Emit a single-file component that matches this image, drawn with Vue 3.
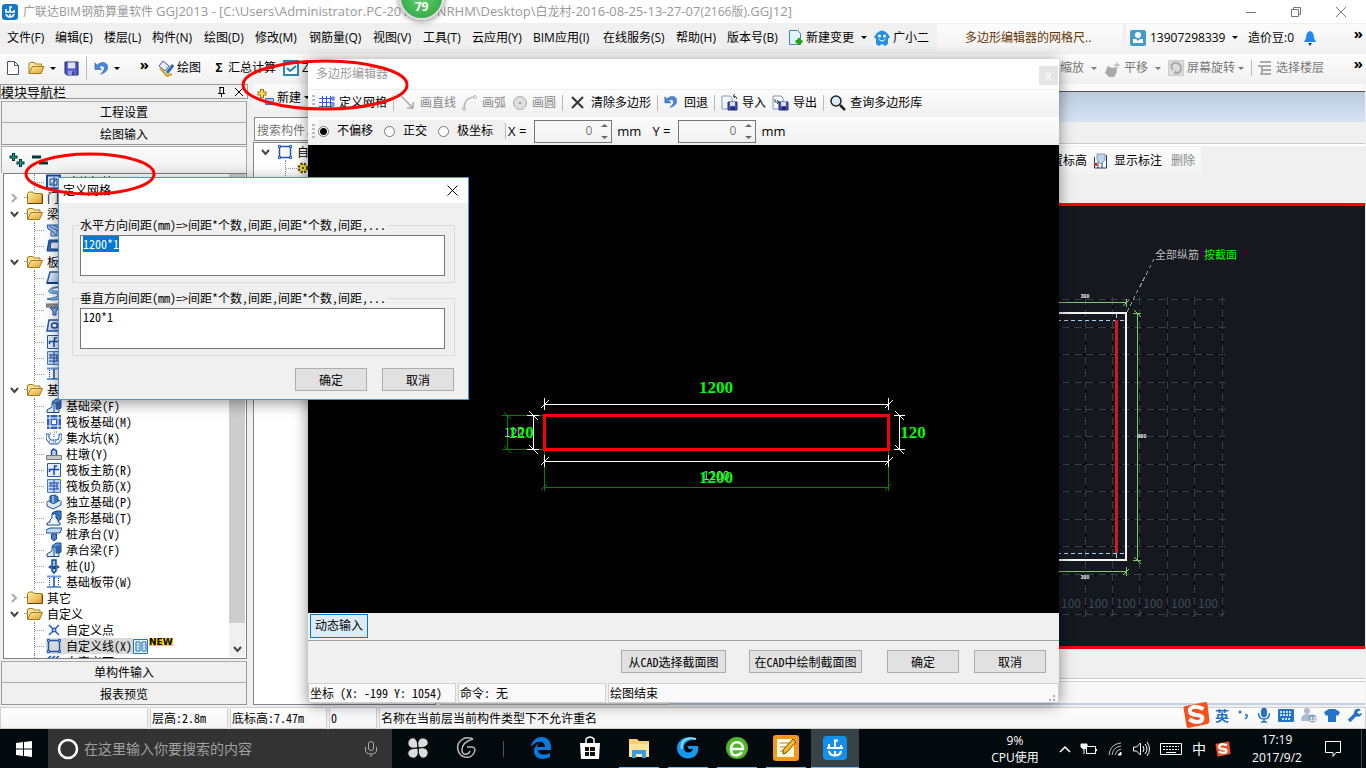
<script setup>
import { onMounted, ref } from 'vue'

const menus = ['文件(F)', '编辑(E)', '楼层(L)', '构件(N)', '绘图(D)', '修改(M)', '钢筋量(Q)', '视图(V)', '工具(T)', '云应用(Y)', 'BIM应用(I)', '在线服务(S)', '帮助(H)', '版本号(B)']

const tree = [
  { level: 2, icon: 'wall', label: '砖体加筋(Y)' },
  { level: 1, icon: 'folder', label: '门窗洞' },
  { level: 1, icon: 'open', label: '梁', expanded: true },
  { level: 2, icon: 'beam', label: '梁(L)' },
  { level: 2, icon: 'ring', label: '圈梁(E)' },
  { level: 1, icon: 'open', label: '板', expanded: true },
  { level: 2, icon: 'slab', label: '现浇板(B)' },
  { level: 2, icon: 'spiral', label: '螺旋板(B)' },
  { level: 2, icon: 'cap', label: '柱帽(V)' },
  { level: 2, icon: 'hole', label: '板洞(N)' },
  { level: 2, icon: 'raft', label: '板受力筋(S)' },
  { level: 2, icon: 'raft2', label: '板负筋(F)' },
  { level: 2, icon: 'strip', label: '楼层板带(H)' },
  { level: 1, icon: 'open', label: '基础', expanded: true },
  { level: 2, icon: 'fbeam', label: '基础梁(F)' },
  { level: 2, icon: 'mat', label: '筏板基础(M)' },
  { level: 2, icon: 'pit', label: '集水坑(K)' },
  { level: 2, icon: 'pier', label: '柱墩(Y)' },
  { level: 2, icon: 'raft', label: '筏板主筋(R)' },
  { level: 2, icon: 'raft2', label: '筏板负筋(X)' },
  { level: 2, icon: 'iso', label: '独立基础(P)' },
  { level: 2, icon: 'tfound', label: '条形基础(T)' },
  { level: 2, icon: 'cap2', label: '桩承台(V)' },
  { level: 2, icon: 'fbeam', label: '承台梁(F)' },
  { level: 2, icon: 'pile', label: '桩(U)' },
  { level: 2, icon: 'strip', label: '基础板带(W)' },
  { level: 1, icon: 'folder', label: '其它' },
  { level: 1, icon: 'open', label: '自定义', expanded: true },
  { level: 2, icon: 'point', label: '自定义点' },
  { level: 2, icon: 'poly', label: '自定义线(X)', selected: true },
  { level: 2, icon: 'area', label: '自定义面' }
]

const gridX = [1085, 1112, 1139, 1167, 1194, 1222]
const gridY = [299, 327, 354, 382, 409, 436, 464, 491, 519, 546, 574]
const dimX = [1071, 1098, 1126, 1153, 1181, 1208]

const offset = ref('none')
const x = ref('0')
const y = ref('0')
const horizontal = ref('1200*1')
const vertical = ref('120*1')
const firstField = ref(null)

onMounted(() => {
  firstField.value.focus()
  firstField.value.select()
})
</script>

<template>
  <div class="screen">
    <svg class="defs" width="0" height="0" aria-hidden="true">
      <defs>
        <linearGradient id="gold" x1="0" y1="0" x2="1" y2="1"><stop offset="0" stop-color="#fff0b0" /><stop offset="1" stop-color="#e0a020" /></linearGradient>
        <linearGradient id="pale" x1="0" y1="0" x2="1" y2="1"><stop offset="0" stop-color="#fff" /><stop offset="1" stop-color="#9cc0ee" /></linearGradient>
        <symbol id="folder" viewBox="0 0 16 16"><path d="M.5 3.5 2 2h4l1 1.500h8v10H.5z" fill="url(#gold)" stroke="#a87818" /><path d="M1 13.500h14.500v-9" fill="none" stroke="#5a4a20" /></symbol>
        <symbol id="open" viewBox="0 0 16 16"><path d="M.5 13V3.500L2 2.500h4l1 1.500h6v3" fill="#fbe6a0" stroke="#a87818" /><path d="M.5 13.500 4 6.500h11.500l-3 7z" fill="url(#gold)" stroke="#a87818" /></symbol>
        <symbol id="wall" viewBox="0 0 16 16"><path d="M1 1.500h13v13H1z" fill="#d8e6fa" stroke="#1548a8" stroke-width="2" /><path d="M4 5h7v6H4zM4 11l7-6M8 3v10" stroke="#1548a8" fill="none" /></symbol>
        <symbol id="beam" viewBox="0 0 16 16"><path d="M1 3h13l1 3-4 2v6H5V8L2 7z" fill="#a8c8f0" stroke="#2860b0" /><path d="m3 4 9 5M7 3l6 3M6 9l4 4" stroke="#2860b0" /></symbol>
        <symbol id="ring" viewBox="0 0 16 16"><path d="M3 2h12v11H1z" fill="#3a70c0" stroke="#123f88" /><path d="M5 4h8v7H4z" fill="#e8f0fc" stroke="#123f88" /></symbol>
        <symbol id="slab" viewBox="0 0 16 16"><path d="M4 2h11v11H1z" fill="url(#pale)" stroke="#2458b0" stroke-width="1.500" /><path d="M1 13h14" stroke="#123f88" stroke-width="2" /></symbol>
        <symbol id="spiral" viewBox="0 0 16 16"><path d="M14 1C4 0 0 6 5 7s7 0 7 2-5 3-11 4c5 2 14 1 14-4s-9-3-9-5 4-2 8-3" fill="#8cc4f0" stroke="#2472b8" /></symbol>
        <symbol id="cap" viewBox="0 0 16 16"><path d="M0 2h16v3H0z" fill="#999" stroke="#666" /><path d="M4 6h9l-3 3v4H7V9z" fill="#8cb4e8" stroke="#1548a8" /></symbol>
        <symbol id="hole" viewBox="0 0 16 16"><path d="M3 2h12v11H1z" fill="url(#pale)" stroke="#2458b0" stroke-width="1.500" /><ellipse cx="8.500" cy="7.500" rx="3" ry="2.500" fill="#fff" stroke="#1548a8" stroke-width="1.500" /></symbol>
        <symbol id="raft" viewBox="0 0 16 16"><path d="M1.500 1.500h13v13h-13z" fill="#e4eefc" stroke="#2458b0" /><path d="M3.500 10V7.500h5V4H11M8 7.500h5M8 7v6" fill="none" stroke="#1548a8" stroke-width="1.500" /></symbol>
        <symbol id="raft2" viewBox="0 0 16 16"><path d="M1.500 1.500h13v13h-13z" fill="#c4d8f6" stroke="#4878c8" /><path d="M3 5h10M3 11h10M8 2v12M5 5v3M11 5v6M3 8h9" fill="none" stroke="#1548a8" /></symbol>
        <symbol id="strip" viewBox="0 0 16 16"><path d="M1 2.500h14M1 13h14" stroke="#6a9ae0" stroke-width="2" /><path d="M3.500 4v8M12.500 4v8" stroke="#1548a8" stroke-dasharray="1 1" /><path d="M8 3v10" stroke="#1548a8" stroke-width="1.500" /></symbol>
        <symbol id="fbeam" viewBox="0 0 16 16"><path d="m6 4 4-3h5v9l-4 1z" fill="#5c96d8" stroke="#174a90" /><path d="M6 5h4v6h3v3.500H1V12l5-3z" fill="#dceafa" stroke="#174a90" /><path d="M10 4v6l5 1V3z" fill="#2c62ac" /><path d="M8 5v9" stroke="#174a90" /></symbol>
        <symbol id="mat" viewBox="0 0 16 16"><path d="M1 1h14v14H1z" fill="#2c60b8" /><path d="M1 4h14M1 12h14M4 1v14M12 1v14" stroke="#fff" /><path d="M6 6h4v4H6z" fill="#fff" /></symbol>
        <symbol id="pit" viewBox="0 0 16 16"><path d="M0 4h3v4l2 2h6l2-2V4h3v5l-4 5H4L0 9z" fill="#e4effc" stroke="#1c54ae" /><path d="M4 3h2M8 2h3M8 4v3M3 11h2m2 1h3m2-3h2" stroke="#1c54ae" stroke-dasharray="1 1" /></symbol>
        <symbol id="pier" viewBox="0 0 16 16"><path d="M5.500 10V5l2-2 3 2v5" fill="#bcd4f4" stroke="#1548a8" stroke-width="1.500" /><path d="M.5 9.500h15v4H.5z" fill="#c8c8c8" stroke="#777" /></symbol>
        <symbol id="iso" viewBox="0 0 16 16"><path d="m1 8 6-3 8 2v4l-8 4-6-3z" fill="#dceafa" stroke="#174a90" /><path d="m4 2 5-1 3 2v5L8 10 4 8z" fill="#3c74bc" stroke="#174a90" /><path d="M7 2v7M1 9l6 2 8-4" stroke="#dceafa" fill="none" /></symbol>
        <symbol id="tfound" viewBox="0 0 16 16"><path d="m6 3 4-2h5v8l-4 3z" fill="#3c74bc" stroke="#174a90" /><path d="M6 4h4v4l2 2v2l2 1v2H1v-2l3-1v-2l2-2z" fill="#f0f6ff" stroke="#174a90" /></symbol>
        <symbol id="cap2" viewBox="0 0 16 16"><path d="m0 4 4-2h12l-2 5H0z" fill="#c4daf4" stroke="#174a90" /><path d="M5.500 8h5v5L8 15l-2.500-2z" fill="#4a80c4" stroke="#174a90" /></symbol>
        <symbol id="pile" viewBox="0 0 16 16"><path d="M6 2h4v11l-2 2-2-2z" fill="#9cc0ee" stroke="#174a90" stroke-width="1.500" /><path d="m2 9 3-2v4zM14 9l-3-2v4zM6 8h4v3H6z" fill="#174a90" /></symbol>
        <symbol id="point" viewBox="0 0 16 16"><path d="m3 3 10 10M13 3 3 13" stroke="#2c60b8" stroke-width="1.500" /><circle cx="8" cy="8" r="2" fill="#8cb4e8" stroke="#1548a8" /></symbol>
        <symbol id="poly" viewBox="0 0 16 16"><path d="M2.500 2.500h11v11h-11z" fill="none" stroke="#1c54b8" stroke-width="1.500" /><path d="M1.500 1.500h2v2h-2zM12.500 1.500h2v2h-2zM1.500 12.500h2v2h-2zM12.500 12.500h2v2h-2z" fill="#cfe2ff" stroke="#1c54b8" /></symbol>
        <symbol id="area" viewBox="0 0 16 16"><path d="m1 5 4-3M5 5l4-3M9 5l4-3" stroke="#1c54b8" stroke-width="1.500" /></symbol>
        <symbol id="undo" viewBox="0 0 16 16"><path d="M1 2v7h7L5.500 6.500C8 4 11 5 11 8c0 2-2 4-4 6 5-1 7.500-4 7.500-7.500C14.500 1 7 0 3.500 4.500z" fill="#4a86dc" stroke="#2456a8" stroke-width=".6" /></symbol>
        <symbol id="save" viewBox="0 0 16 16"><path d="M1 1h14v14H3l-2-2z" fill="#4450c0" stroke="#283080" /><path d="M4 1.500h8V8H4z" fill="#dce4fa" /><path d="M4 10h8v5H4z" fill="#9098e0" /><path d="M9 11h2v4H9z" fill="#20286c" /></symbol>
        <symbol id="transfer" viewBox="0 0 17 17"><path d="M1 2h8l2 2v11H1z" fill="#f4f8ff" stroke="#8898b8" /><path d="M7 8h9v8H7z" fill="#4450b8" stroke="#283080" /><path d="M9 8h5v4H9z" fill="#d8dff8" /><path d="M10 13h4v3h-4z" fill="#222c70" /></symbol>
        <symbol id="sogou" viewBox="0 0 28 28"><path d="M3 5 23 1q2 0 2 2l2 17q0 2-2 3L6 27q-2 0-2-2L1 7q0-2 2-2z" fill="#f4511e" /><path d="M21 8C12 3 5 7 8 12c3 3 12 1 12 5 0 5-9 5-13 1" fill="none" stroke="#fff" stroke-width="4" /></symbol>
      </defs>
    </svg>

    <header class="titlebar">
      <svg class="app-mark" viewBox="0 0 16 16"><rect width="16" height="16" rx="3" fill="#1478c8" /><path d="M10 3H8v5H3M8 8h5M8 10v3M4 10c1 4 7 4 8 0M4 5v3M12 6v2" fill="none" stroke="#fff" stroke-width="1.500" /></svg>
      <h1>广联达BIM钢筋算量软件 <span>GGJ2013 - [C:\Users\Administrator.PC-2014</span>007<span>NRHM\Desktop\</span>白龙村-<span>2016-08-25-13-27-07</span>(2166版)<span>.GGJ12]</span></h1>
      <div class="window-tools">
        <button aria-label="最小化"><svg width="12" height="12"><path d="M1 6.500h10" stroke="#777" /></svg></button>
        <button aria-label="还原"><svg width="12" height="12" fill="none" stroke="#777"><path d="M1.500 3.500h7v7h-7zM3.500 3V1.500h7v7H9" /></svg></button>
        <button aria-label="关闭"><svg width="12" height="12"><path d="m1 1 10 10M11 1 1 11" stroke="#777" /></svg></button>
      </div>
    </header>

    <nav class="menubar">
      <div class="menus">
        <button v-for="m in menus" :key="m">{{ m }}</button>
        <button class="iconed"><svg width="15" height="16"><path d="M1.500.5h8l3 3v11h-11z" fill="#e4f4ff" stroke="#3a86b8" /><path d="M11 8v7M7.500 11.500h7" stroke="#28a018" stroke-width="3" /></svg>新建变更<i class="drop"></i></button>
        <button class="iconed"><svg width="16" height="16"><path d="M3 3q5-5 10 0l3 4-2 2v5l-3 2-3-2-3 2-3-2V9L0 7z" fill="#2490e0" /><circle cx="5.500" cy="6" r="1.500" fill="#fff" /><circle cx="10.500" cy="6" r="1.500" fill="#fff" /><path d="M4.500 9q3.500 4 7 0" stroke="#fff" fill="none" /></svg>广小二</button>
      </div>
      <div class="promo"><a href="#">多边形编辑器的网格尺..</a></div>
      <div class="account">
        <button class="iconed phone"><svg width="16" height="16"><rect width="16" height="16" rx="2" fill="#429ccc" /><circle cx="8" cy="5" r="3" fill="#fff" /><path d="M3 13V9h3l2 2 2-2h3v4z" fill="#fff" /></svg>13907298339<i class="drop"></i></button>
        <span>造价豆:0</span>
        <button aria-label="通知"><svg width="14" height="16"><path d="M7 1q4 1 4 7l2 4H1l2-4q0-6 4-7" fill="#2088f0" /><path d="M5 13h4L7 16z" fill="#124880" /></svg></button>
        <b class="more">»</b>
      </div>
    </nav>

    <div class="toolbar">
      <div class="file-tools">
        <button aria-label="新建"><svg width="14" height="16"><path d="M1.500 1.500h7l4 4v9h-11z" fill="#fff" stroke="#46586e" /><path d="M8.500 1.500v4h4" fill="none" stroke="#46586e" /></svg></button>
        <button aria-label="打开"><svg width="17" height="16"><use href="#open" /></svg></button><i class="drop"></i>
        <button aria-label="保存"><svg width="15" height="15"><use href="#save" /></svg></button>
        <i class="rule"></i>
        <button aria-label="撤销"><svg width="15" height="15"><use href="#undo" /></svg></button><i class="drop"></i>
        <b class="more">»</b>
      </div>
      <div class="draw-tools">
        <button class="iconed"><svg width="17" height="17"><path d="m2 6 4-5 6 5-4 5z" fill="#e0eaf8" stroke="#445c90" /><path d="m3 8 7 8 5-2" fill="none" stroke="#d8a020" stroke-width="2" /><path d="m10 13 6-8" stroke="#3868b0" stroke-width="3" /></svg>绘图</button>
        <button class="sum"><b>Σ</b>汇总计算</button>
        <button class="iconed"><svg width="16" height="16"><rect width="16" height="16" fill="#2c88b8" /><path d="M2 3h12v11H2z" fill="#fff" /><path d="m4 8 3 3 6-5" fill="none" stroke="#2080c0" stroke-width="2" /></svg>Z</button>
      </div>
      <div class="view-tools">
        <span>缩放</span><i class="drop"></i>
        <svg width="17" height="17"><path d="M3 8q0-3 3-1l2 1 4-1 1 5-3 5H5l-4-4z" fill="#aaa" /><path d="M10 5h6M13 2v7" stroke="#aaa" /></svg><span>平移</span><i class="drop"></i>
        <svg width="16" height="16"><path d="M.5.5h15v15H.5z" fill="#ddd" stroke="#ccc" /><path d="M3 6q2-4 6-3 5 2 4 7M13 10q-2 4-6 3l1-2M3 6l2 4" fill="none" stroke="#aaa" stroke-width="2" /></svg><span>屏幕旋转</span><i class="drop tight"></i>
        <i class="rule"></i>
        <svg width="16" height="16"><path d="M3 2h11M1 6h13M5 10h9M3 14h11M5 6v8" stroke="#aaa" stroke-width="2" /></svg><span>选择楼层</span>
        <b class="more">»</b>
      </div>
    </div>

    <main class="work">
      <aside class="nav">
        <div class="nav-title"><span>模块导航栏</span><svg width="28" height="12" fill="none" stroke="#000"><path d="M3 1.500h5M4 1v6M7.500 1v6M2 7.500h7M5.500 8v3" /><path d="m19 2 8 8M27 2l-8 8" /></svg></div>
        <button class="section">工程设置</button>
        <button class="section">绘图输入</button>
        <div class="nav-tools"><svg width="40" height="20"><path d="M5.500 1v8M1.500 5h8M12.500 7v8M8.500 11h8" stroke="#003838" stroke-width="3" /><path d="M5.500 2v6M2.500 5h6M12.500 8v6M9.500 11h6" stroke="#20a090" stroke-width="1" /><path d="M24 5h9M31 11h9" stroke="#003838" stroke-width="3" /></svg></div>
        <div class="tree">
          <ul>
            <li v-for="(n, i) in tree" :key="i" :class="['l' + n.level, { selected: n.selected }]">
              <svg v-if="n.level === 1" class="chev" width="9" height="9" fill="none" stroke-width="2"><path :d="n.expanded ? 'M1 2l3.500 4L8 2' : 'M2 0l4 4-4 4'" :stroke="n.expanded ? '#444' : '#aaa'" /></svg>
              <i class="twig"></i>
              <span class="node"><svg width="16" height="16"><use :href="'#' + n.icon" /></svg><span class="name">{{ n.label }}</span></span>
              <template v-if="n.selected"><svg width="15" height="15"><path d="M.5.500h14v14H.5z" fill="#dff2ff" stroke="#2878a8" /><path d="M3 3h4v9H3zM9 3h4v9H9z" fill="none" stroke="#2468a0" /><path d="M3 6h4M9 6h4M3 9h4M9 9h4" stroke="#68a0d0" /></svg><em class="new">NEW</em></template>
            </li>
          </ul>
          <div class="scroll"><svg width="9" height="7" fill="none" stroke="#444" stroke-width="2"><path d="m1 1 3.500 4L8 1" /></svg></div>
        </div>
        <button class="section">单构件输入</button>
        <button class="section">报表预览</button>
      </aside>

      <section class="members">
        <div class="member-tools"><button class="iconed"><svg width="17" height="17"><path d="M5 0v9M.5 4.500h9" stroke="#9a7a10" stroke-width="4" /><path d="M5 1v7M1.500 4.500h7" stroke="#ffe060" stroke-width="2" /><path d="M8.500 9.500h8v6h-8z" fill="#a8ccf8" stroke="#3868c0" /></svg>新建<i class="drop"></i></button></div>
        <input class="search" aria-label="搜索构件" placeholder="搜索构件..." />
        <div class="member-tree">
          <div class="member root"><svg width="9" height="9" fill="none" stroke="#444" stroke-width="2"><path d="M1 2l3.500 4L8 2" /></svg><svg width="16" height="16"><use href="#poly" /></svg>自定义线</div>
          <div class="member leaf"><i></i><svg width="12" height="12"><circle cx="6" cy="6" r="4" fill="#ffe820" stroke="#554800" stroke-width="3" stroke-dasharray="2 1.200" /><circle cx="6" cy="6" r="3" fill="#ffe820" /><circle cx="6" cy="6" r="1" /></svg></div>
        </div>
      </section>

      <section class="spare"></section>

      <section class="view">
        <div class="view-strip"></div>
        <div class="view-head"></div>
        <div class="view-gap"></div>
        <div class="view-bar">
          <div><span>设置标高</span><svg width="15" height="16"><path d="M1.500 4v11h12V2" fill="#fff" stroke="#124070" /><path d="M5 15V9M9 15V8" stroke="#124070" /><path d="M4 1h8v6l-4 4-4-4z" fill="#b8d4f0" stroke="#9098a8" /><path d="M1 10h3v3H1z" fill="#e02818" /></svg><span>显示标注</span><span class="off">删除</span></div>
        </div>
        <div class="drawing">
          <svg width="696" height="440" viewBox="669 206 696 440" fill="none" shape-rendering="crispEdges">
            <g stroke="#000"><path v-for="g in gridX" :key="g" :d="`M${g}.5 297V618`" /><path v-for="g in gridY" :key="g" :d="`M1050 ${g}.5H1226`" /><path d="M1050 614.500H1224" /></g>
            <g stroke="#363d49" stroke-dasharray="8 4"><path v-for="g in gridX" :key="g" :d="`M${g}.5 297V618`" /><path v-for="g in gridY" :key="g" :d="`M1050 ${g}.5H1226`" /><path d="M1050 614.500H1224" /></g>
            <g stroke="#3a4250"><path v-for="g in gridX" :key="g" :d="`M${g - 2} 617l5-5`" /></g>
            <g class="dims"><text v-for="d in dimX" :key="d" :x="d" y="608">100</text></g>
            <path d="M1000 313H1126V560H1000" stroke="#f4f4f4" stroke-width="2" />
            <path d="M1050 320.500H1126M1050 553.500H1126M1116.500 314v6M1116.500 554v6" stroke="#a8d0f4" stroke-dasharray="4 3" />
            <path d="M1116.500 320V553" stroke="#d01820" stroke-width="3" />
            <path d="M1050 302.500H1126M1126.500 299v8M1123 306l6-6M1137.500 313V560M1133 313.500h8M1134 310l7 7M1133 560.500h8M1134 557l7 7M1050 571.500H1126M1126.500 567v9M1123 575l6-6" stroke="#80c868" />
            <path d="M1127 312 1155 257" stroke="#999" stroke-dasharray="4 3" />
            <g class="tiny"><text x="1085" y="298">300</text><text x="1142" y="438">900</text><text x="1085" y="579">300</text></g>
            <text class="note" x="1155" y="259" fill="#bbb">全部纵筋</text><text class="note" x="1204" y="259" fill="#0f0">按截面</text>
          </svg>
        </div>
        <div class="view-foot"></div>
      </section>
    </main>

    <footer class="status">
      <span></span><span>层高:2.8m</span><span>底标高:7.47m</span><span>0</span><span>名称在当前层当前构件类型下不允许重名</span>
      <div class="ime">
        <svg width="29" height="28"><use href="#sogou" /></svg><b>英</b>
        <svg width="14" height="16"><circle cx="4" cy="5" r="1.500" fill="#2474c8" /><path d="M9 8h2v2l-2 2" stroke="#2474c8" fill="none" stroke-width="1.500" /></svg>
        <svg width="14" height="16" fill="none" stroke="#2474c8"><rect x="4.500" y="1" width="5" height="9" rx="2.500" fill="#2474c8" /><path d="M1.500 6q0 6 5.500 6t5.500-6M7 12v3M4 15h6" stroke-width="1.500" /></svg>
        <svg width="16" height="14"><rect width="16" height="13" y="1" rx="1" fill="#2474c8" /><path d="M2 4h12M2 7h12M4 11h8" stroke="#fff" stroke-dasharray="2 1" stroke-width="1.500" /></svg>
        <svg width="16" height="16"><circle cx="6" cy="4" r="3" fill="#aabbd4" /><path d="M0 14q0-7 6-7t6 7z" fill="#aabbd4" /><circle cx="11.500" cy="11.500" r="4" fill="#8ca0be" /><text class="badge" x="8.500" y="14">12</text></svg>
        <svg width="16" height="14"><path d="M5 1h6l5 3-2 4-2-1v7H4V7L2 8 0 4z" fill="#2474c8" /></svg>
        <svg width="16" height="16"><path d="m2 14 7-7" stroke="#2474c8" stroke-width="3.500" /><path d="M14 3a4 4 0 1 0 1 3l-3 1-2-2z" fill="#2474c8" /></svg>
      </div>
    </footer>

    <footer class="taskbar">
      <button class="start" aria-label="开始"><svg width="16" height="16"><path d="m0 2 7-1v6.500H0zM8 1l8-1v7.500H8zM0 8.500h7V15l-7-1zM8 8.500h8V16l-8-1z" fill="#fff" /></svg></button>
      <label class="cortana"><svg width="22" height="22"><circle cx="11" cy="11" r="9" fill="none" stroke="#fff" stroke-width="2.500" /></svg><input aria-label="搜索" placeholder="在这里输入你要搜索的内容" /><svg width="14" height="18" fill="none" stroke="#aaa"><rect x="4.500" y="1.500" width="5" height="9" rx="2.500" /><path d="M1.500 7v3q0 4 5.500 4t5.500-4V7M7 14v3" /></svg></label>
      <div class="apps">
        <button aria-label="风车"><svg width="24" height="24" fill="#ddd" stroke="#111"><path d="M12 12C3 14 0 8 3 4s9-3 9 8zM12 12C10 3 16 0 20 3s3 9-8 9zM12 12c9-2 12 4 9 8s-9 3-9-8zM12 12c2 9-4 12-8 9s-3-9 8-9z" /></svg></button>
        <button aria-label="旋涡"><svg width="24" height="24" fill="none" stroke="#bbb" stroke-width="1.500"><path d="M18 3C9-1 1 6 3 14s12 10 16 3c2-4 0-6-2-6h-5M18 3C11 5 7 9 7 14s6 6 8 1" /></svg></button>
        <i class="bar"></i>
        <button aria-label="Edge"><svg width="24" height="24"><path d="M2 11C3 4 8 1 13 1c6 0 9 5 9 11v2H9c0 5 7 6 12 3v4C14 25 5 23 5 15c0-4 3-7 6-8-2 1-3 3-3 4h8c0-7-9-7-14 0z" fill="#0a7ae0" /></svg></button>
        <button aria-label="应用商店"><svg width="24" height="24"><path d="M2 7h20l-1 16H3z" fill="#fff" /><path d="M8 7V3q4-4 8 0v4" fill="none" stroke="#fff" stroke-width="1.500" /><path d="M7 11h4v4H7zM12 11h5v4h-5zM7 16h4v4H7zM12 16h5v4h-5z" fill="#111" /></svg></button>
        <button class="run" aria-label="文件资源管理器"><svg width="24" height="24"><path d="M2 3h8l2 2h10v16H2z" fill="#f7d070" /><path d="M2 8h20v13H2z" fill="#fde49a" /><path d="M5 22v-8h14v8h-4v-4H9v4z" fill="#3a9ce0" /></svg></button>
        <button class="run" aria-label="浏览器"><svg width="24" height="24"><path d="M20 3C10-2 1 4 1 12s9 13 17 9c4-3 5-8 4-11H11l2 3h4c-1 4-8 5-9 0-1-5 3-9 12-10z" fill="#1898ec" /><path d="M20 3C10 0 4 6 6 13" fill="none" stroke="#8cdcff" stroke-width="2" /></svg></button>
        <button class="run" aria-label="安全浏览器"><svg width="24" height="24"><circle cx="12" cy="12" r="11" fill="#4cb828" /><path d="M6 13h12c0-9-12-9-12 0s8 7 11 3" fill="none" stroke="#fff" stroke-width="2.500" /></svg></button>
        <button class="run" aria-label="笔记"><svg width="26" height="26"><rect width="26" height="26" rx="3" fill="#f49818" /><path d="M4 4h17v18H4z" fill="#fff8e0" /><path d="M7 8h10M7 12h7M7 16h5" stroke="#b88030" /><path d="m10 19 3-1L23 7l-3-3L10 15z" fill="#f8b820" stroke="#704810" /></svg></button>
        <button class="run current" aria-label="广联达"><svg width="24" height="24"><rect width="24" height="24" rx="4" fill="#1490ea" /><path d="M15 4.500h-3V12H4M12 12h8M12 15v5M6 15c1 6 11 6 12 0M6 8v4M18 9v3" fill="none" stroke="#fff" stroke-width="2" /></svg></button>
      </div>
      <div class="tray">
        <div class="cpu">9%<br />CPU使用</div>
        <div class="tray-icons">
          <svg width="12" height="12" fill="none" stroke="#fff"><path d="m1 9 5-5 5 5" stroke-width="1.500" /></svg>
          <svg width="18" height="16" fill="none" stroke="#fff"><path d="M6.500 5.500h9v7h-9zM16.500 8v2" /><path d="M1 3h6v3q-3 4-6 0zM4 8v5" fill="#fff" /></svg>
          <svg width="16" height="16" fill="none" stroke="#bbb"><path d="M2 14Q3 3 14 2M5 14q1-8 9-9M8 14q1-5 6-6" /><path d="m11 14 3-3v3z" fill="#fff" stroke="#fff" /></svg>
          <svg width="18" height="16" fill="none" stroke="#fff"><path d="M1.500 6h3l4-4v12l-4-4h-3zM11 5q2 3 0 6M13 3q4 5 0 10M15 1q5 7 0 14" /></svg>
          <svg width="24" height="14" fill="none" stroke="#fff"><path d="M1.500 1.500h21v11h-21z" /><path d="M4 4.500h16M4 7.500h16" stroke-dasharray="2 1" /><path d="M7 10.500h10" /></svg>
          <span class="zh">中</span>
          <svg width="16" height="16" viewBox="0 0 28 28"><use href="#sogou" width="28" height="28" /></svg>
        </div>
        <div class="clock">17:19<br />2017/9/2</div>
        <svg class="inbox" width="18" height="18" fill="none" stroke="#fff"><path d="M1.500 1.500h15v11H12l-3 4v-4H1.500z" /></svg>
        <i class="peek"></i>
      </div>
    </footer>

    <section class="editor">
      <div class="editor-title"><h2>多边形编辑器</h2><button aria-label="关闭">x</button></div>
      <div class="editor-tools">
        <i class="grip"></i>
        <button><svg width="16" height="16" stroke="#2c5cc0"><path d="M0 3.500h13M0 7.500h13M0 11.500h13M3.500 1v14M7.500 1v14M11.500 1v14M13 2h2v3h-2zM13 8h2v3h-2z" fill="none" /></svg>定义网格</button>
        <i class="rule"></i>
        <button disabled><svg width="16" height="16"><path d="m1 1 12 12M13 7v6H7" fill="none" stroke="#aaa" stroke-width="1.500" /></svg>画直线</button>
        <button disabled><svg width="16" height="16" fill="none" stroke="#bbb"><path d="M2 14Q2 3 12 2" stroke-width="1.500" /><circle cx="13" cy="2" r="1.500" /><circle cx="2" cy="14" r="1.500" /></svg>画弧</button>
        <button disabled><svg width="16" height="16"><circle cx="8" cy="8" r="6.500" fill="#ddd" stroke="#aaa" /><circle cx="8" cy="8" r="1" fill="#888" /></svg>画圆</button>
        <i class="rule"></i>
        <button><svg width="18" height="16"><path d="m3 2 11 11M14 2 3 13" stroke="#333" stroke-width="2" /></svg>清除多边形</button>
        <i class="rule"></i>
        <button><svg width="16" height="16"><use href="#undo" width="14" height="14" /></svg>回退</button>
        <i class="rule"></i>
        <button><svg width="17" height="17"><use href="#transfer" /><path d="M16 5q0-3-4-3l2-2m-2 2 2 2" fill="none" stroke="#345" /></svg>导入</button>
        <button><svg width="17" height="17"><use href="#transfer" /><path d="M3 5v3h4L5 6m2 2-2 2" fill="none" stroke="#345" /></svg>导出</button>
        <i class="rule"></i>
        <button><svg width="16" height="16"><circle cx="6" cy="6" r="5" fill="#d8ecfa" stroke="#222" stroke-width="1.500" /><path d="m10 10 5 5" stroke="#222" stroke-width="2.500" /></svg>查询多边形库</button>
      </div>
      <div class="editor-coords">
        <i class="grip"></i>
        <div class="radios">
          <label><input v-model="offset" type="radio" value="none" />不偏移</label>
          <label><input v-model="offset" type="radio" value="ortho" />正交</label>
          <label><input v-model="offset" type="radio" value="polar" />极坐标</label>
        </div>
        <i class="rule"></i>
        <label class="coord">X =<span class="spin"><input v-model="x" /><svg width="9" height="19"><path d="m1 5 3.500-3L8 5zM1 14l3.500 3L8 14z" fill="#666" /></svg></span>mm</label>
        <label class="coord">Y =<span class="spin"><input v-model="y" /><svg width="9" height="19"><path d="m1 5 3.500-3L8 5zM1 14l3.500 3L8 14z" fill="#666" /></svg></span>mm</label>
      </div>
      <div class="canvas">
        <svg width="751" height="468" viewBox="308 145 751 468" fill="none" shape-rendering="crispEdges">
          <path d="M507.500 415V449M502 415.500H543M502 449.500H543M504 412l7 7M504 446l7 7M544.500 451V491M888.500 451V491M544 487.500H888M541 490l6-6M885 490l6-6" stroke="#008000" />
          <g class="ghost"><text x="514" y="437">120</text><text x="716" y="480">1200</text></g>
          <g stroke="#fff"><path d="M544 404.500H888M544.500 398v12M888.500 398v12M541 408l8-8M885 408l8-8M544 461.500H888M544.500 455v12M888.500 455v12M541 465l8-8M885 465l8-8M533.500 415V449M527 415.500h12M527 449.500h12M529 411l9 9M529 445l9 9M899.500 415V449M894 415.500h11M894 449.500h11M895 411l9 9M895 445l9 9" /></g>
          <rect x="544.500" y="415.500" width="344" height="34" stroke="#f00" stroke-width="3" />
          <g class="dimension"><text x="716" y="393">1200</text><text x="716" y="483">1200</text><text x="521" y="438">120</text><text x="913" y="438">120</text></g>
        </svg>
      </div>
      <div class="dyn"><button>动态输入</button></div>
      <div class="editor-actions"><button>从CAD选择截面图</button><button>在CAD中绘制截面图</button><button>确定</button><button>取消</button></div>
      <div class="editor-status"><span>坐标 (X: -199 Y: 1054)</span><span>命令: 无</span><span>绘图结束</span><i></i></div>
    </section>

    <form class="dialog" @submit.prevent>
      <div class="dialog-title"><h2>定义网格</h2><button type="button" aria-label="关闭"><svg width="11" height="11"><path d="m.5.5 10 10m0-10-10 10" stroke="#000" /></svg></button></div>
      <div class="dialog-body">
        <fieldset><legend><label for="hor">水平方向间距(mm)=&gt;间距*个数,间距,间距*个数,间距,...</label></legend><textarea id="hor" ref="firstField" v-model="horizontal"></textarea></fieldset>
        <fieldset><legend><label for="ver">垂直方向间距(mm)=&gt;间距*个数,间距,间距*个数,间距,...</label></legend><textarea id="ver" v-model="vertical"></textarea></fieldset>
        <div class="dialog-actions"><button type="button">确定</button><button type="button">取消</button></div>
      </div>
    </form>

    <div class="meter">79</div>
    <svg class="marks" width="420" height="200" fill="none" stroke="#f00" stroke-width="3"><ellipse cx="325" cy="85" rx="82" ry="24" /><ellipse cx="90" cy="174" rx="64" ry="20" /></svg>
  </div>
</template>

<style>
body { background: #f0f0f0; }
</style>

<style scoped>
* { box-sizing: border-box; }
.screen { position: relative; display: flex; flex-direction: column; min-height: 100vh; overflow: hidden; background: #f0f0f0; color: #000; font: 12px/16px "Open Sans", "Noto Sans CJK SC", sans-serif; }
.defs { position: absolute; }
button { font: inherit; color: inherit; border: 0; padding: 0; margin: 0; background: none; white-space: nowrap; }
svg { flex: none; display: block; }
h1, h2, ul { margin: 0; padding: 0; font: inherit; list-style: none; }
a { color: inherit; text-decoration: none; }
input, textarea { font: inherit; }
.iconed { display: flex; align-items: center; gap: 3px; }
.drop { flex: none; border: 3px solid transparent; border-top-color: currentColor; border-bottom: 0; }
.rule { flex: none; width: 1px; height: 16px; background: #bbb; }
.more { font-size: 15px; line-height: 16px; }
.tree, .member-tree, .nav, .status, .dialog-body, .editor-actions, .editor-status, .search { font-family: "Noto Sans CJK SC", sans-serif; font-feature-settings: "hwid" 1; }

.titlebar { display: flex; align-items: center; height: 23px; padding-left: 2px; background: #fff; color: #999; }
.app-mark { width: 16px; height: 16px; margin-right: 5px; }
.titlebar h1 { flex: 1; white-space: nowrap; }
.titlebar span { font-size: 13px; }
.window-tools { display: flex; gap: 33px; padding-right: 19px; }

.menubar { display: flex; align-items: center; height: 31px; padding-bottom: 2px; }
.menus { flex: 1; display: grid; grid-template-columns: 48px 49px 48px 52px 51px 54px 64px 50px 49px 61px 70px 73px 51px 61px 86px 1fr; padding-left: 7px; }
.menus button { text-align: left; }
.menus .drop { margin-left: 4px; }
.promo { width: 186px; height: 28px; padding: 6px 0 0 28px; margin-right: 3px; background: linear-gradient(#fcfcfc, #f2f2f2); color: #663300; white-space: nowrap; }
.account { display: flex; align-items: center; width: 240px; height: 28px; padding-left: 4px; background: linear-gradient(#fcfcfc, #f0f0f0); }
.phone { width: 118px; gap: 4px; }
.account > span { width: 55px; }
.account .more, .view-tools .more { margin-left: auto; padding: 0 3px 10px 0; }
.phone .drop { margin-left: 3px; }

.toolbar { display: flex; align-items: center; height: 30px; padding-bottom: 2px; background: linear-gradient(#fdfdfd, #f0f0f0); }
.file-tools { display: flex; align-items: center; width: 153px; padding-left: 6px; }
.file-tools button + button { margin-left: 8px; }
.file-tools .drop { margin: 0 8px 0 5px; }
.file-tools .rule { height: 24px; margin: 0 7px; }
.file-tools .more { margin-left: auto; padding: 0 4px 8px 0; }
.draw-tools { display: flex; align-items: center; gap: 9px; padding-left: 4px; }
.draw-tools .iconed { gap: 3px; }
.draw-tools .sum + .iconed { margin-left: -2px; }
.sum b { display: inline-block; width: 18px; }
.view-tools { display: flex; align-items: center; flex: none; gap: 7px; width: 306px; margin-left: auto; color: #777; }
.view-tools svg + span { margin-left: -4px; }
.view-tools .tight { margin-left: -4px; }
.view-tools .rule + svg { margin-left: -2px; }
.view-tools .more { color: #000; }

.work { flex: 1; display: flex; min-height: 0; padding-bottom: 2px; }
.nav { display: flex; flex-direction: column; width: 248px; margin-right: 5px; }
.nav-title { display: flex; align-items: center; justify-content: space-between; height: 15px; padding: 0 3px 0 0; border: 1px solid #999; }
.nav-title span { font-size: 13px; }
.section { height: 22px; margin: 0 1px; border: 1px solid #999; border-top-color: #aaa; background: #f0f0f0; text-align: center; }
.nav-title + .section { margin-top: 2px; }
.section + .section { margin-top: -1px; height: 23px; }
.nav-tools { height: 27px; margin: 1px 1px 0; padding: 5px 0 0 6px; border: 1px solid #aaa; border-bottom: 0; background: linear-gradient(#fdfdfd, #eee); }
.tree { position: relative; flex: 1 1 0; min-height: 0; margin: 0 1px 2px 3px; border: 1px solid #808080; background: #fff; overflow: hidden; }
.tree ul { position: relative; }
.tree li { display: flex; align-items: center; height: 16px; padding-left: 42px; white-space: nowrap; }
.tree li.l1 { padding-left: 6px; }
.chev { margin-right: 5px; }
.twig { align-self: flex-start; width: 3px; height: 8px; border-bottom: 1px dotted #888; }
.l2 .twig { width: 10px; height: 16px; margin-left: -12px; margin-right: 2px; border-bottom: 0; border-left: 1px dotted #888; background: linear-gradient(90deg, #999 50%, transparent 0) 0 8px / 2px 1px repeat-x; }
.l2 .node { padding-right: 1px; }
.node { display: flex; align-items: center; gap: 4px; height: 16px; }
.selected .node { background: #d9d9d9; }
.new { align-self: flex-start; margin-left: 1px; background: #ffd800; font: bold 9px/8px "DejaVu Sans", sans-serif; }
.scroll { position: absolute; top: 0; right: 1px; bottom: 1px; width: 16px; display: flex; align-items: flex-end; justify-content: center; padding-bottom: 4px; background: linear-gradient(#cdcdcd, #cdcdcd) 0 0 / 100% 449px no-repeat #f0f0f0; }

.members { display: flex; flex-direction: column; width: 183px; }
.member-tools { height: 28px; padding: 5px 0 0 4px; background: linear-gradient(#fcfcfc, #f0f0f0); }
.search { width: 180px; height: 24px; margin: 5px 0 1px 1px; padding: 0 2px; border: 1px solid #888; background: #fff; color: #777; }
.member-tree { flex: 1; border: 1px solid #828790; background: #fff; }
.member { display: flex; align-items: center; height: 16px; }
.root { gap: 8px; padding: 1px 0 0 7px; height: 17px; }
.root svg + svg { margin: 0 -4px 0 -1px; }
.leaf i { width: 12px; height: 16px; margin: 0 0 0 31px; border-left: 1px dotted #888; background: linear-gradient(90deg, #999 50%, transparent 0) 0 8px / 2px 1px repeat-x; }
.spare { width: 229px; margin: 0 0 0 4px; border-bottom: 1px solid #b8b8b8; }

.view { flex: 1; display: flex; flex-direction: column; min-width: 0; margin-right: 1px; }
.view-strip { height: 8px; border-bottom: 1px solid #555; background: #fafafa; }
.view-head { height: 30px; background: linear-gradient(#bccbdc, #d6e4f4); }
.view-gap { height: 22px; border-bottom: 1px solid #ccc; }
.view-bar { height: 59px; padding-top: 1px; border-top: 2px solid #fff; }
.view-bar div { display: flex; align-items: center; gap: 6px; width: 532px; height: 28px; padding-left: 370px; background: linear-gradient(#fcfcfc, #f2f2f2); white-space: nowrap; }
.off { margin-left: 3px; color: #888; }
.drawing { flex: 1; overflow: hidden; border: solid #f00; border-width: 3px 0; background: #15181f; }
.dims { fill: #424956; font: 12px "Noto Sans CJK SC"; text-anchor: middle; }
.tiny { fill: #fff; font: bold 5px "Liberation Sans"; text-anchor: middle; }
.note { font: 11px "Noto Sans CJK SC"; }
.view-foot { height: 56px; border-bottom: 2px solid #c4d2e4; background: linear-gradient(#f0f0f0 29px, #c8c8c8 29px 30px, #fff 30px 32px, #d0d0d0 32px 33px, #f8f8f8 33px); }

.status { position: relative; display: grid; grid-template-columns: 148px 78px 97px 48px 1fr; gap: 2px; height: 22px; }
.status > span { padding: 2px 1px; border: 1px solid #d0d0d0; background: linear-gradient(#fff, #f4f4f4); white-space: nowrap; }
.ime { position: absolute; right: 3px; bottom: 0; display: flex; align-items: center; gap: 7px; height: 28px; color: #2474c8; }
.ime b { margin-left: -3px; font-size: 14px; }
.badge { fill: #fff; font: bold 6px "Liberation Sans"; }

.taskbar { display: flex; height: 40px; background: #020a0d; color: #fff; }
.start { display: grid; place-items: center; width: 48px; }
.cortana { display: flex; align-items: center; width: 344px; padding: 0 14px 0 9px; background: #333; }
.cortana input { flex: 1; min-width: 0; border: 0; background: none; padding: 0 5px; font-size: 14px; outline: 0; }
.cortana input::placeholder { color: #a0a0a0; opacity: 1; }
.apps { display: flex; }
.apps button { display: grid; place-items: center; width: 40px; margin: 0 5px 0 4px; border-bottom: 2px solid transparent; }
.apps button:first-child { margin-left: 6px; }
.apps .bar { width: 1px; height: 16px; margin: 12px 13px 12px 11px; background: #555; }
.apps .run { border-bottom-color: #7ab8f0; }
.apps .current { width: 48px; margin: 0; background: #374347; }
.tray { display: flex; align-items: center; margin-left: auto; text-align: center; }
.cpu { width: 56px; line-height: 17px; margin-right: 16px; }
.tray-icons { display: flex; align-items: center; gap: 9px; }
.zh { font-size: 14px; }
.clock { width: 64px; margin: 0 15px 0 14px; line-height: 18px; }
.inbox { margin-right: 19px; }
.peek { width: 1px; height: 40px; margin-right: 4px; background: #444; }

.editor { position: absolute; left: 308px; top: 59px; width: 751px; background: #f0f0f0; box-shadow: 0 2px 14px rgba(0, 0, 0, .45); }
.editor-title { display: flex; justify-content: space-between; height: 30px; padding: 7px 1px 0 8px; background: #fff; color: #999; }
.editor-title button { width: 19px; height: 19px; background: #e5e5e5; color: #fff; }
.editor-tools { display: flex; align-items: center; height: 28px; padding: 0 0 2px 4px; border-top: 1px solid #eee; background: linear-gradient(#fcfcfc, #f0f0f0); }
.editor-tools button { display: flex; align-items: center; gap: 4px; margin-right: 6px; }
.editor-tools .rule { margin: 0 6px 0 0; }
.editor-tools button:disabled { color: #888; }
.grip { width: 3px; height: 15px; margin-right: 4px; background: repeating-linear-gradient(#bbb 0 2px, transparent 2px 4px); }
.editor-coords { display: flex; align-items: center; height: 28px; padding-left: 4px; background: linear-gradient(#fcfcfc, #f0f0f0); }
.editor-coords .grip { margin-right: 3px; }
.radios { display: flex; gap: 11px; width: 187px; height: 22px; background: #f0f0f0; }
.radios label { display: flex; align-items: center; gap: 8px; white-space: nowrap; }
.radios input { appearance: none; width: 11px; height: 11px; margin: 0; border: 1px solid #777; border-radius: 50%; background: #fff; }
.radios input:checked { background: radial-gradient(#000 0 3px, #fff 4px); }
.coord { display: flex; align-items: center; margin: 0 9px 0 2px; font-size: 13px; white-space: nowrap; }
.spin { display: flex; align-items: center; width: 78px; height: 23px; margin: 0 5px 0 8px; padding-right: 2px; border: 1px solid #777; }
.spin input { flex: 1; min-width: 0; border: 0; padding: 0 8px 0 0; background: none; outline: 0; color: #777; text-align: right; font-size: 12px; }
.canvas { height: 468px; overflow: hidden; background: #000; }
.ghost { fill: #bbb; font: 12px "Noto Sans CJK SC"; text-anchor: middle; }
.dimension { fill: #0f0; font: bold 17px "Liberation Serif", serif; text-anchor: middle; }
.dyn { height: 28px; padding: 1px 2px; border-bottom: 1px solid #a0a0a0; }
.dyn button { width: 58px; height: 24px; border: 1px solid #0078d7; background: #dcebf6; }
.editor-actions { display: flex; justify-content: flex-end; height: 42px; padding: 9px 13px 0 0; }
.editor-actions button, .dialog-actions button { width: 72px; height: 23px; margin-left: 15px; border: 1px solid #adadad; background: #e1e1e1; }
.editor-actions button:nth-child(1) { width: 105px; }
.editor-actions button:nth-child(2) { width: 113px; margin: 0 10px 0 23px; }
.editor-status { position: relative; display: grid; grid-template-columns: 148px 148px 1fr; gap: 2px; height: 20px; }
.editor-status span { padding: 1px 0 0 1px; border: 1px solid #d0d0d0; background: #f9f9f9; white-space: nowrap; }
.editor-status i { position: absolute; right: 2px; bottom: 2px; width: 10px; height: 10px; background: conic-gradient(#aaa 25%, transparent 0) 0 0 / 4px 4px; clip-path: polygon(100% 0, 100% 100%, 0 100%); }

.dialog { position: absolute; left: 58px; top: 177px; width: 411px; border: 1px solid #4a94dc; background: #f0f0f0; box-shadow: 0 3px 14px rgba(0, 0, 0, .4); }
.dialog-title { display: flex; align-items: center; justify-content: space-between; height: 25px; padding: 0 10px 0 4px; background: #fff; }
.dialog-body { padding: 14px 13px 8px; }
fieldset { min-width: 0; height: 66px; margin: 0 0 7px; padding: 2px 9px 6px 7px; border: 1px solid #dcdcdc; }
legend { padding: 0; white-space: nowrap; }
textarea { display: block; width: 100%; height: 41px; padding: 0 2px; border: 1px solid #777; border-radius: 0; background: #fff; resize: none; outline: 0; }
textarea::selection { background: #0078d7; color: #fff; }
.dialog-actions { display: flex; justify-content: flex-end; margin: 12px 1px 0 0; }

.meter { position: absolute; left: 399px; top: -25px; width: 45px; height: 45px; padding-top: 22px; border: 2px solid #ddd; border-radius: 50%; background: radial-gradient(#6ad070, #22a03c); box-shadow: 0 1px 6px rgba(0, 0, 0, .5); color: #fff; text-align: center; font-weight: bold; }
.marks { position: absolute; left: 0; top: 0; pointer-events: none; }
</style>
